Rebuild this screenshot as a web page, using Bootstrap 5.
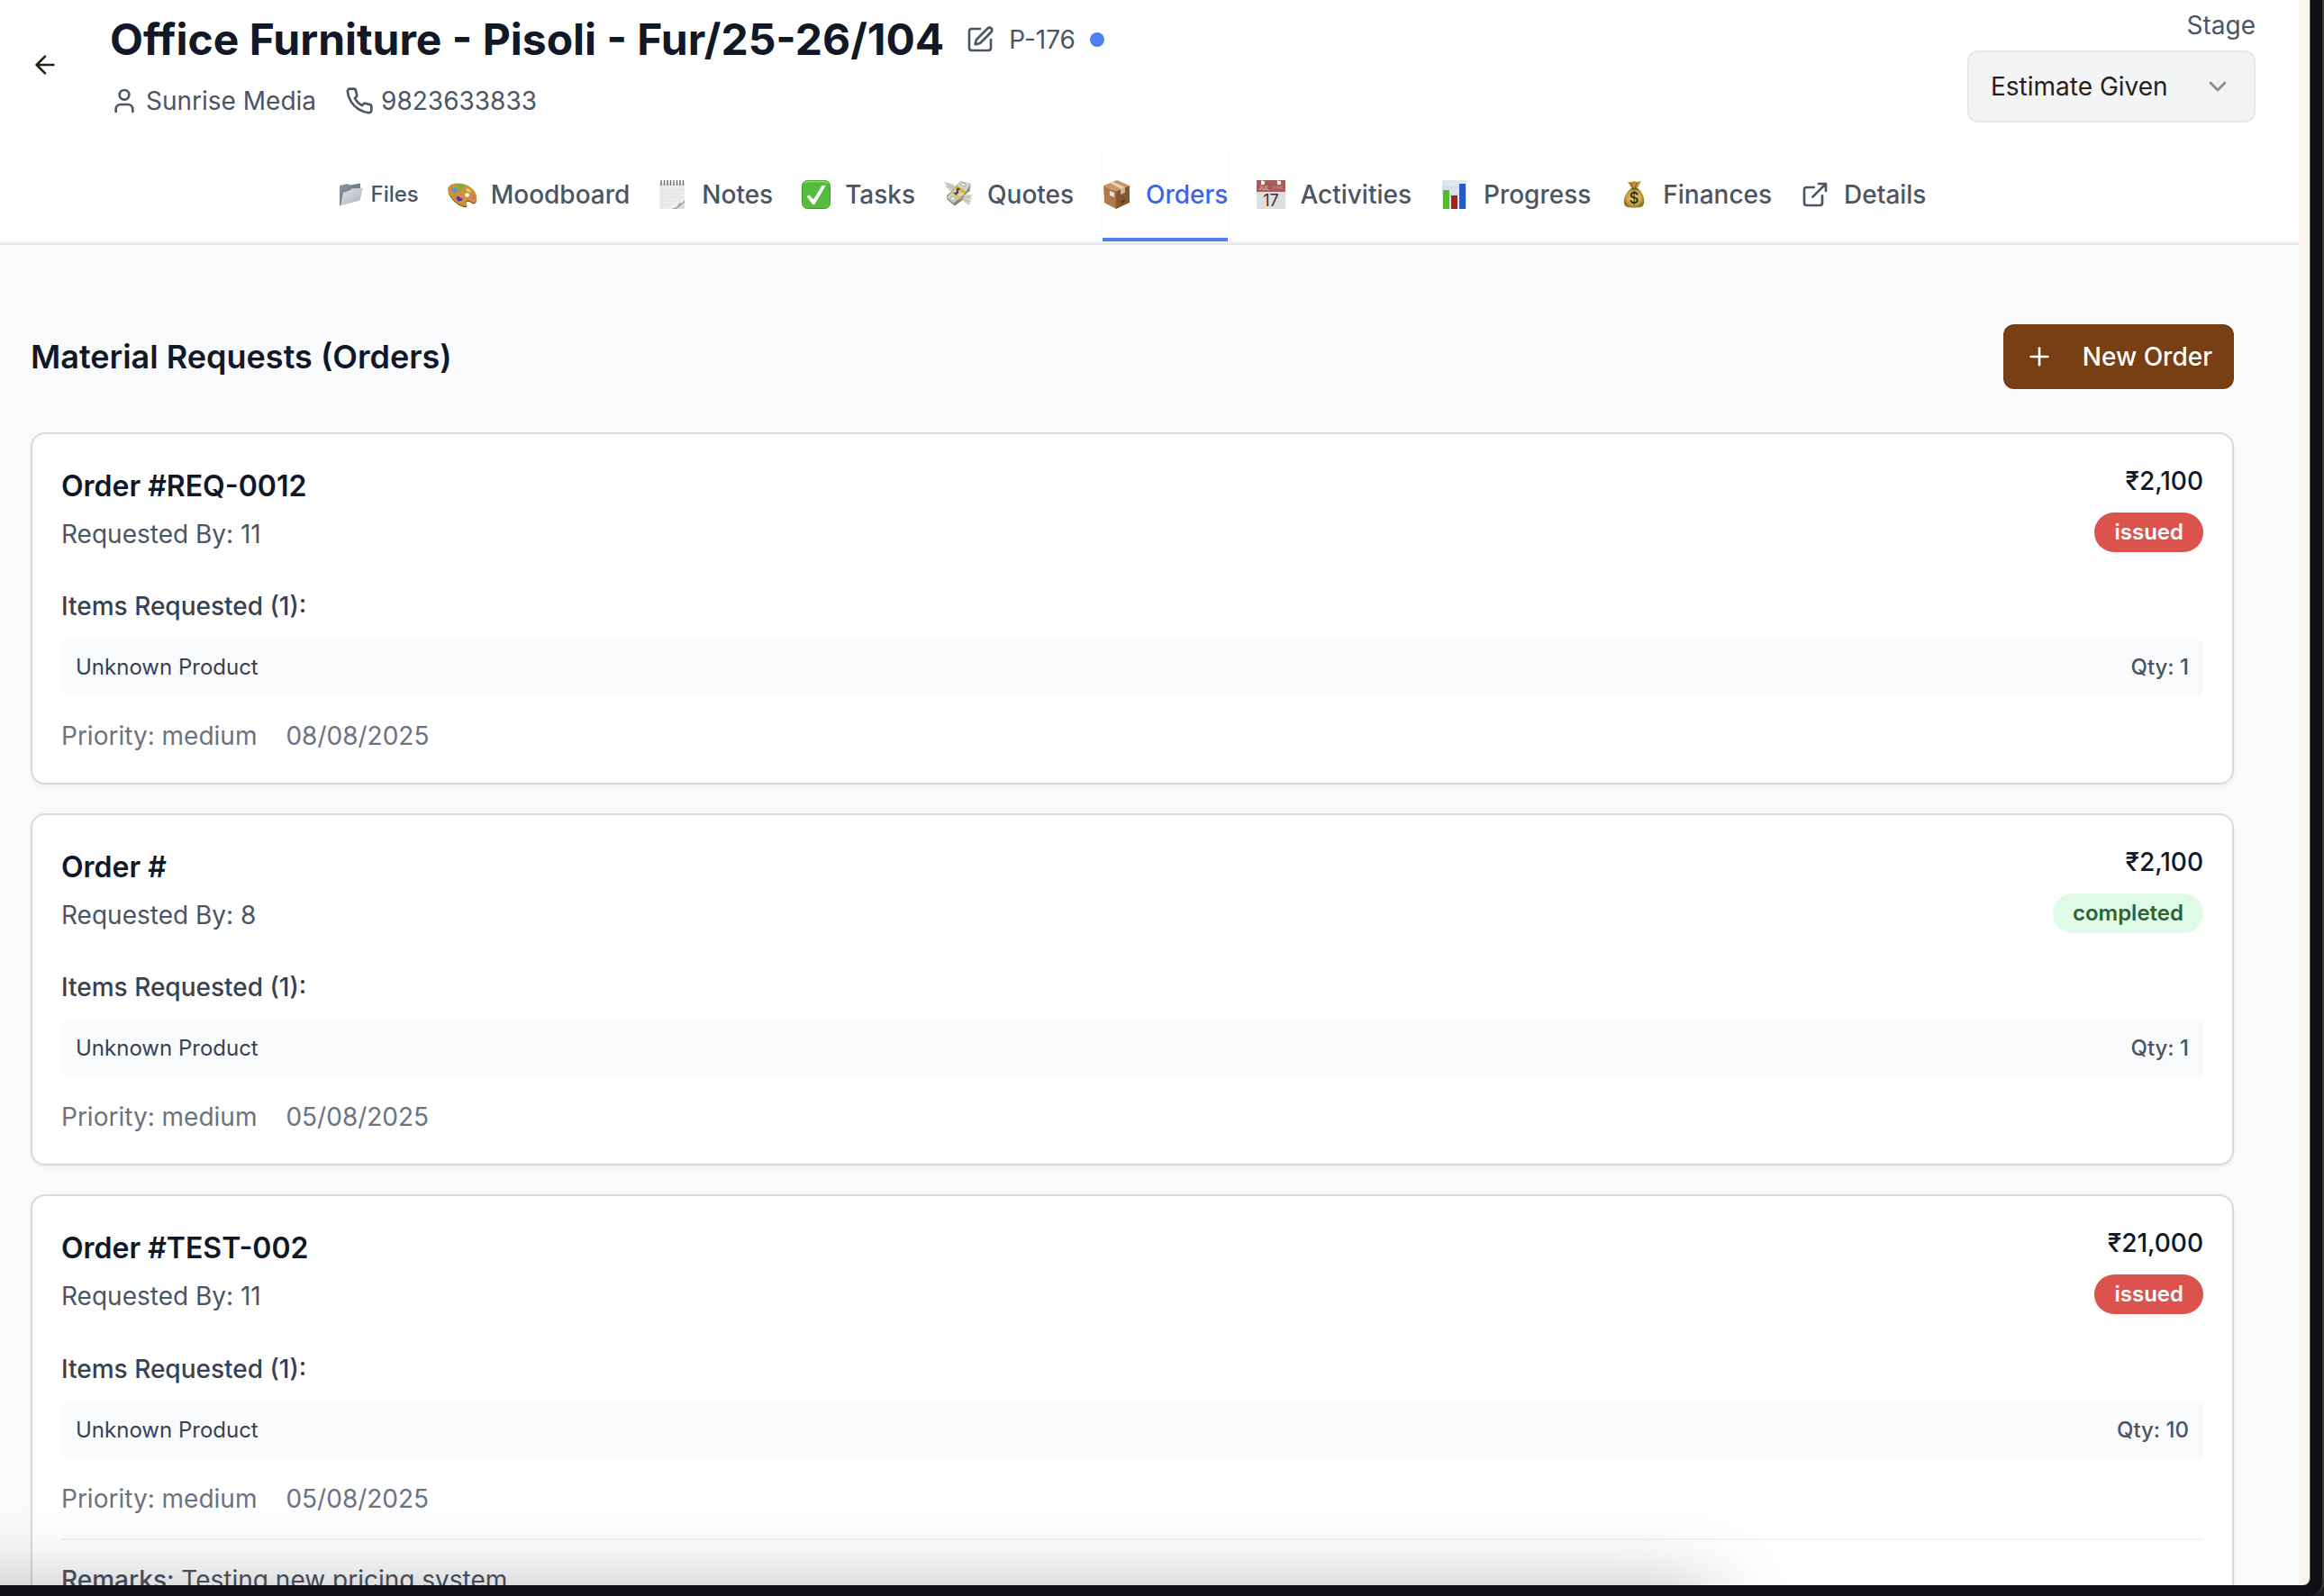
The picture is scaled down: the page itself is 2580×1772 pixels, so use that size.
<!DOCTYPE html>
<html lang="en">
<head>
<meta charset="utf-8">
<meta name="viewport" content="width=device-width, initial-scale=1">
<title>Office Furniture - Pisoli - Fur/25-26/104</title>
<link href="https://cdn.jsdelivr.net/npm/bootstrap@5.3.0/dist/css/bootstrap.min.css" rel="stylesheet">
<style>
  body { font-family: Inter, "Liberation Sans", sans-serif; font-size: 28px; line-height: 40px; color: #111827; background: #1c1c1e; overflow: hidden; }
  .device { width: 2580px; height: 1772px; background: #0f1014; border-right: 2px solid #3a3a3d; border-bottom-right-radius: 16px; }
  .screen { width: 2565px; height: 1760px; background: #f9f4ec; border-right: 1px solid #5b5d60; border-bottom-right-radius: 8px; overflow: hidden; }
  .page { width: 2552px; height: 1760px; background: #f9fafc; }
  .ico { width: 32px; height: 32px; flex: none; display: block; }
  .ln { fill: none; stroke: currentColor; stroke-width: 2; stroke-linecap: round; stroke-linejoin: round; }
  .top-head { height: 272px; background: #fff; border-bottom: 2px solid #e5e7eb; box-shadow: inset 0 -2px 0 #f1f2f4; }
  .head-row { height: 168px; padding: 0 48px 0 34px; }
  .back-btn { color: #292018; margin-top: 56px; }
  .head-info { margin-left: 56px; padding-top: 12px; }
  .proj-title { font-size: 48px; line-height: 64px; font-weight: 700; }
  .muted-1 { color: #4b5563; }
  .phone-ico { margin-left: 32px; }
  .dot { width: 16px; height: 16px; background: #4f80ee; }
  .stage-col { width: 320px; padding-top: 8px; }
  .stage-select { height: 80px; margin-top: 8px; padding: 0 24px; border: 2px solid #e5e7eb; border-radius: 12px; background: #f3f4f6; color: #292018; }
  .tabs-row { height: 100px; gap: 32px; padding-left: 375.5px; }
  .tab-item { height: 100px; padding-top: 4px; padding-bottom: 8px; gap: 16px; color: #4b5563; font-weight: 500; white-space: nowrap; letter-spacing: -.01px; }
  .tab-item.is-on { color: #3b66e8; border-bottom: 4px solid #4f80ee; padding-bottom: 4px; box-shadow: -1px 0 0 #fafafa, 1px 0 0 #fafafa; }
  .tab-small { font-size: 24px; gap: 8px; }
  .tab-small .ico { width: 28px; height: 28px; }
  .main-area { padding: 88px 72px 0 34px; }
  .sec-title { font-size: 36px; line-height: 56px; font-weight: 600; }
  .btn-new, .btn-new:hover { height: 72px; padding: 0 24px; gap: 32px; background: #783e14; color: #fff; border: 0; border-radius: 12px; font-size: 28px; font-weight: 500; }
  .order-list { margin-top: 48px; gap: 32px; }
  .order-card { border: 2px solid #dfdad1; border-radius: 16px; background: #fff; padding: 32px; box-shadow: 0 2px 4px rgba(0,0,0,.05); }
  .order-name { font-size: 32px; line-height: 52px; font-weight: 600; margin-bottom: 7px; }
  .order-side { gap: 15px; }
  .pill { font-size: 24px; line-height: 32px; padding: 6px 22px; font-weight: 600; }
  .pill-issued { background: #dc524d; color: #fff; }
  .pill-done { background: #dffbe7; color: #2c6439; }
  .items-label { color: #374151; font-weight: 500; margin: 40.2px 0 16px; }
  .item-row { font-size: 24px; line-height: 32px; padding: 16px; border-radius: 8px; background: #f9fafc; color: #374151; }
  .meta { color: #6b7280; gap: 32px; margin-top: 24px; }
  .remarks { margin-top: 24px; padding-top: 24px; border-top: 2px solid #f3f4f6; color: #4b5563; }
  .dock-shade { left: -100px; top: 1786px; width: 1984px; height: 60px; box-shadow: 0 0 90px 18px rgba(0,0,0,.3); }
</style>
<script src="https://cdn.jsdelivr.net/npm/bootstrap@5.3.0/dist/js/bootstrap.bundle.min.js"></script>
</head>
<body>
<div class="device">
 <div class="screen position-relative">
  <div class="page">
   <header class="top-head">
    <div class="head-row d-flex align-items-start">
      <a class="back-btn" href="#" aria-label="Back"><svg class="ico ln" viewBox="0 0 24 24"><path d="m12 19-7-7 7-7M19 12H5"/></svg></a>
      <div class="head-info">
        <div class="d-flex align-items-center">
          <h1 class="proj-title mb-0 text-nowrap">Office Furniture - Pisoli - Fur/25-26/104</h1>
          <span class="muted-1 ms-4"><svg class="ico ln" viewBox="0 0 24 24"><path d="M12 3H5a2 2 0 0 0-2 2v14a2 2 0 0 0 2 2h14a2 2 0 0 0 2-2v-7"/><path d="M18.375 2.625a1 1 0 0 1 3 3l-9.013 9.014a2 2 0 0 1-.853.505l-2.873.84a.5.5 0 0 1-.62-.62l.84-2.873a2 2 0 0 1 .506-.852z"/></svg></span>
          <span class="muted-1 ms-3">P-176</span>
          <span class="dot rounded-circle ms-3"></span>
        </div>
        <div class="d-flex align-items-center muted-1 mt-3">
          <svg class="ico ln me-2" viewBox="0 0 24 24"><path d="M19 21v-2a4 4 0 0 0-4-4H9a4 4 0 0 0-4 4v2"/><circle cx="12" cy="7" r="4"/></svg>
          <span>Sunrise Media</span>
          <svg class="ico ln me-2 phone-ico" viewBox="0 0 24 24"><path d="M22 16.92v3a2 2 0 0 1-2.18 2 19.79 19.79 0 0 1-8.63-3.07 19.5 19.5 0 0 1-6-6 19.79 19.79 0 0 1-3.07-8.67A2 2 0 0 1 4.11 2h3a2 2 0 0 1 2 1.72 12.84 12.84 0 0 0 .7 2.81 2 2 0 0 1-.45 2.11L8.09 9.91a16 16 0 0 0 6 6l1.27-1.27a2 2 0 0 1 2.11-.45 12.84 12.84 0 0 0 2.81.7A2 2 0 0 1 22 16.92z"/></svg>
          <span>9823633833</span>
        </div>
      </div>
      <div class="stage-col ms-auto">
        <div class="text-end muted-1">Stage</div>
        <div class="stage-select d-flex align-items-center justify-content-between">
          <span>Estimate Given</span>
          <svg class="ico ln opacity-50" viewBox="0 0 24 24"><path d="m6 9 6 6 6-6"/></svg>
        </div>
      </div>
    </div>
    <nav class="tabs-row d-flex">
      <div class="tab-item tab-small d-flex align-items-center"><svg class="ico" viewBox="0 0 28 28"><defs><linearGradient id="fa" x1="0" y1="0" x2="1" y2="1"><stop offset="0" stop-color="#8b9aa6"/><stop offset="1" stop-color="#53626e"/></linearGradient><linearGradient id="fb" x1="0" y1="0" x2="1" y2="1"><stop offset="0" stop-color="#e2e5e9"/><stop offset="1" stop-color="#a9afb8"/></linearGradient></defs><path fill="url(#fa)" d="M1 4l9-2 2 1.500 12-2v9L2 26H1z"/><path fill="url(#fb)" d="M5 12l8-3 1-1.500L27 6.500 23.500 20.500 2 26.500z"/></svg><span>Files</span></div>
      <div class="tab-item d-flex align-items-center"><svg class="ico" viewBox="0 0 32 32"><path id="pal" d="M.5 10C.5 5 6 3.500 12 3.500c9 0 16 5 19 11 2 4 1.500 9-1 10.500-3 1-4.500-2.500-7-2.500s-3 2-2 4c.8 1.600.3 3-2 2.500C11 27.500.5 18 .5 10z" fill="#7d4f1c" transform="translate(0 1.200)"/><path d="M.5 10C.5 5 6 3.500 12 3.500c9 0 16 5 19 11 2 4 1.500 9-1 10.500-3 1-4.500-2.500-7-2.500s-3 2-2 4c.8 1.600.3 3-2 2.500C11 27.500.5 18 .5 10z" fill="#cb9140"/><path d="M4.500 10l3-2.500 1.500 2 2.500 1-1 3-4 .5z" fill="#3fa3dc"/><path d="M11 6l3-2 4 2-1 3-4 .5z" fill="#5fbf33"/><path d="M20.500 9l3 .5 3 3.500-3 .5-3-2z" fill="#f0d53c"/><path d="M26.500 17l2.500-.5 2 3.500-2 1.500-2.500-2z" fill="#f0695c"/><path d="M9.500 20l2-2.500 2 2 3 .5-1 3-4 .5z" fill="#7226ad"/><circle cx="21.500" cy="16.500" r="2.300" fill="#fff"/></svg><span>Moodboard</span></div>
      <div class="tab-item d-flex align-items-center"><svg class="ico" viewBox="0 0 32 32"><path d="M1 3h28v29H1z" fill="#ececed"/><path d="M4 11h24M4 15h24M4 19h24M4 23h16M4 27h12" stroke="#dfe2e8"/><path d="M4 7v25" stroke="#edd3d5" stroke-width=".8"/><path d="M14 32c7-1 8-3 8-6 3 0 5-1 7-4v10z" fill="#dedede"/><path d="M14 32c6-1 8-3 8.500-6 3 0 5-1 6.500-4v3c-4 2-6 5-9 7z" fill="#9d9fa1"/><path d="M3 0v6M6.500 0v6M10 0v6M13.500 0v6M17 0v6M20.500 0v6M24 0v6M27.500 0v6" stroke="#73706e" stroke-width="1.400"/></svg><span>Notes</span></div>
      <div class="tab-item d-flex align-items-center"><svg class="ico" viewBox="0 0 32 32"><rect x=".5" y=".5" width="31" height="31" rx="6" fill="#55bd3b" stroke="#3c9c28"/><path d="M3 3.500q2-2 5-2h16q3 0 5 2" stroke="#8ade70" stroke-width="1.500" fill="none"/><path d="M5.500 18l3-1.500 4.500 5L22.500 6l4 .3L14.500 27h-2.500z" fill="#fff"/></svg><span>Tasks</span></div>
      <div class="tab-item d-flex align-items-center"><svg class="ico" viewBox="0 0 32 32"><path d="M0 2c4 1 7 1 10 2l4 5-3 4c-3-.5-5-1-7-2.500 1 0 1.500-.3 2-.5C3 9 1.500 7.500 1 6h2C1.500 5 .5 3.500 0 2z" fill="#d6d4c9"/><path d="M3 4l8 4M4 7l6 3" stroke="#aaa89c" stroke-width=".8"/><path d="M20 16c4-1 8-.5 12 .5-1 1.500-2 2-3 2.200l2.500 2.300-2.500.5 1.500 2.500-2 .3 1 3c-4 0-7-2-9-5.500z" fill="#d6d4c9"/><path d="M22 18l8 1M22 21l6 3" stroke="#aaa89c" stroke-width=".8"/><path d="M18 1l12 3-1.500 7-6 5-2 6-9 6.500L3 21v-4l6-5 4-5z" fill="#8d8e7c"/><path d="M18 1l12 3-8 12-11.500 9.500L3 19l7-7z" fill="#d3d5c4"/><ellipse cx="21.500" cy="5" rx="3" ry="1.800" fill="#f1f2e8" stroke="#9b9d89" stroke-width=".8" transform="rotate(20 21.500 5)"/><ellipse cx="10" cy="20.500" rx="3" ry="2" fill="#f1f2e8" stroke="#9b9d89" stroke-width=".8" transform="rotate(20 10 20.500)"/><path d="M13.500 5.500l11 7-2 3-11-7z" fill="#e4b23c"/><path d="M9 12.500l11.500 7-1 3.500L8 15z" fill="#e4b23c" opacity=".55"/><path d="M17.500 10.500c-2-1.500-4-.5-3 1s2 2 0 3-3 0-3-1M16 8.500l-3 8" fill="none" stroke="#4f4624" stroke-width="1.500"/><path d="M12 27.500l9-6.500M23 16l6-5" stroke="#6f705e"/></svg><span>Quotes</span></div>
      <div class="tab-item is-on d-flex align-items-center"><svg class="ico" viewBox="0 0 32 32"><path d="M1 6l14 6v20L2 25z" fill="#b1794c"/><path d="M15 12l15-6v19l-15 7z" fill="#85572f"/><path d="M1 6L16 0l14 6-15 6z" fill="#c69665"/><path d="M8 3l3-1.500L25 8l-4 2z" fill="#ead6bf"/><path d="M20 10l5-2v6l-5 2z" fill="#cdb396"/><path d="M8 12l5 2v5l-5-2z" fill="#d9e1e6"/><path d="M21 23l4-2v3l-4 2z" fill="#5d3a1c"/><path d="M15 12v19" stroke="#976235"/></svg><span>Orders</span></div>
      <div class="tab-item d-flex align-items-center"><svg class="ico" viewBox="0 0 32 32"><path d="M0 0h32v32H0z" fill="#dedede"/><path d="M0 0h32v13H0z" fill="#a85b5b"/><circle cx="7" cy="3" r="2.200" fill="#fff"/><circle cx="25" cy="3" r="2.200" fill="#fff"/><path d="M6 0v3M23 0l2 3" stroke="#fff"/><path d="M18 8h11" stroke="#b87575" stroke-width="3"/><text x="2" y="11" font-size="6.500" fill="#e1baba">JUL</text><text x="16" y="29" text-anchor="middle" font-size="18" font-weight="400" fill="#333">17</text></svg><span>Activities</span></div>
      <div class="tab-item d-flex align-items-center"><svg class="ico" viewBox="0 0 32 32"><path d="M2 0h27v32H2z" fill="#dce6ee"/><path d="M2 8h27M2 16h27M2 24h27" stroke="#c8d4dd"/><path d="M3 11h7v21H3z" fill="#55b936"/><path d="M12 17h7v15h-7z" fill="#ac2018"/><path d="M21 4h7v28h-7z" fill="#2859c0"/></svg><span>Progress</span></div>
      <div class="tab-item d-flex align-items-center"><svg class="ico" viewBox="0 0 32 32"><defs><radialGradient id="bag"><stop offset="0" stop-color="#ecd26c"/><stop offset=".7" stop-color="#cfa942"/><stop offset="1" stop-color="#94712a"/></radialGradient></defs><path d="M9 2l4 0 3-1 3 1 5-1-5 9h-5z" fill="#bd9240"/><path d="M12 3l3 6M19 3l-2 6" stroke="#80602b"/><path d="M13 9h7c5 4 8 10 7 17-1 4-4 4.500-11 4.500S6 30 5 26c-1-7 3-13 8-17z" fill="url(#bag)"/><path d="M13 9.500h7" stroke="#6f5021" stroke-width="1.500"/><text x="16" y="26" text-anchor="middle" font-size="17" font-weight="500" fill="#30280f">$</text></svg><span>Finances</span></div>
      <div class="tab-item d-flex align-items-center"><svg class="ico ln" viewBox="0 0 24 24"><path d="M15 3h6v6M10 14 21 3M18 13v6a2 2 0 0 1-2 2H5a2 2 0 0 1-2-2V8a2 2 0 0 1 2-2h6"/></svg><span>Details</span></div>
    </nav>
   </header>

   <main class="main-area">
    <div class="d-flex align-items-center justify-content-between">
      <h2 class="sec-title mb-0">Material Requests (Orders)</h2>
      <button class="btn btn-new d-flex align-items-center"><svg class="ico ln" viewBox="0 0 24 24"><path d="M5 12h14M12 5v14"/></svg><span>New Order</span></button>
    </div>
    <div class="order-list d-flex flex-column">
      <section class="order-card">
        <div class="d-flex justify-content-between align-items-start">
          <div><h3 class="order-name">Order #REQ-0012</h3><div class="muted-1">Requested By: 11</div></div>
          <div class="order-side d-flex flex-column align-items-end"><span class="fw-medium">₹2,100</span><span class="badge rounded-pill pill pill-issued">issued</span></div>
        </div>
        <div class="items-label">Items Requested (1):</div>
        <div class="item-row d-flex justify-content-between"><span>Unknown Product</span><span class="muted-1 fw-medium">Qty: 1</span></div>
        <div class="meta d-flex"><span>Priority: medium</span><span>08/08/2025</span></div>
      </section>
      <section class="order-card">
        <div class="d-flex justify-content-between align-items-start">
          <div><h3 class="order-name">Order #</h3><div class="muted-1">Requested By: 8</div></div>
          <div class="order-side d-flex flex-column align-items-end"><span class="fw-medium">₹2,100</span><span class="badge rounded-pill pill pill-done">completed</span></div>
        </div>
        <div class="items-label">Items Requested (1):</div>
        <div class="item-row d-flex justify-content-between"><span>Unknown Product</span><span class="muted-1 fw-medium">Qty: 1</span></div>
        <div class="meta d-flex"><span>Priority: medium</span><span>05/08/2025</span></div>
      </section>
      <section class="order-card">
        <div class="d-flex justify-content-between align-items-start">
          <div><h3 class="order-name">Order #TEST-002</h3><div class="muted-1">Requested By: 11</div></div>
          <div class="order-side d-flex flex-column align-items-end"><span class="fw-medium">₹21,000</span><span class="badge rounded-pill pill pill-issued">issued</span></div>
        </div>
        <div class="items-label">Items Requested (1):</div>
        <div class="item-row d-flex justify-content-between"><span>Unknown Product</span><span class="muted-1 fw-medium">Qty: 10</span></div>
        <div class="meta d-flex"><span>Priority: medium</span><span>05/08/2025</span></div>
        <div class="remarks"><span class="fw-medium">Remarks:</span> Testing new pricing system</div>
      </section>
    </div>
   </main>
  </div>
  <div class="dock-shade position-absolute"></div>
 </div>
</div>
</body>
</html>
